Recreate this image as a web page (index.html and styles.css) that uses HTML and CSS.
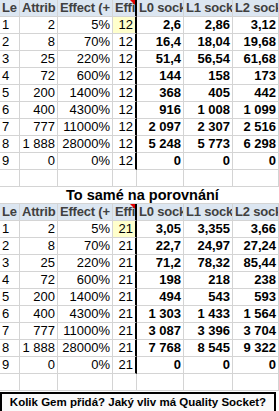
FILE: index.html
```html
<!DOCTYPE html>
<html>
<head>
<meta charset="utf-8">
<link rel="stylesheet" href="styles.css">
</head>
<body>
<div class="sheet">
  <div class="row hdr">
    <div class="c">Le</div><div class="c">Attrib</div><div class="c">Effect (+</div><div class="c d tri">Effi</div><div class="c">L0 sock</div><div class="c">L1 sock</div><div class="c">L2 sock</div>
  </div>
  <div class="row"><div class="c">1</div><div class="c n">2</div><div class="c n">5%</div><div class="c n d yel">12</div><div class="c n b">2,6</div><div class="c n b">2,86</div><div class="c n b">3,12</div></div>
  <div class="row"><div class="c">2</div><div class="c n">8</div><div class="c n">70%</div><div class="c n d">12</div><div class="c n b">16,4</div><div class="c n b">18,04</div><div class="c n b">19,68</div></div>
  <div class="row"><div class="c">3</div><div class="c n">25</div><div class="c n">220%</div><div class="c n d">12</div><div class="c n b">51,4</div><div class="c n b">56,54</div><div class="c n b">61,68</div></div>
  <div class="row"><div class="c">4</div><div class="c n">72</div><div class="c n">600%</div><div class="c n d">12</div><div class="c n b">144</div><div class="c n b">158</div><div class="c n b">173</div></div>
  <div class="row"><div class="c">5</div><div class="c n">200</div><div class="c n">1400%</div><div class="c n d">12</div><div class="c n b">368</div><div class="c n b">405</div><div class="c n b">442</div></div>
  <div class="row"><div class="c">6</div><div class="c n">400</div><div class="c n">4300%</div><div class="c n d">12</div><div class="c n b">916</div><div class="c n b">1 008</div><div class="c n b">1 099</div></div>
  <div class="row"><div class="c">7</div><div class="c n">777</div><div class="c n">11000%</div><div class="c n d">12</div><div class="c n b">2 097</div><div class="c n b">2 307</div><div class="c n b">2 516</div></div>
  <div class="row"><div class="c">8</div><div class="c n">1 888</div><div class="c n">28000%</div><div class="c n d">12</div><div class="c n b">5 248</div><div class="c n b">5 773</div><div class="c n b">6 298</div></div>
  <div class="row"><div class="c">9</div><div class="c n">0</div><div class="c n">0%</div><div class="c n d">12</div><div class="c n b">0</div><div class="c n b">0</div><div class="c n b">0</div></div>
  <div class="row"><div class="c"></div><div class="c"></div><div class="c"></div><div class="c"></div><div class="c"></div><div class="c"></div><div class="c"></div></div>
  <div class="row title"><div class="c span">To samé na porovnání</div></div>
  <div class="row hdr">
    <div class="c">Le</div><div class="c">Attrib</div><div class="c">Effect (+</div><div class="c d tri">Effi</div><div class="c">L0 sock</div><div class="c">L1 sock</div><div class="c">L2 sock</div>
  </div>
  <div class="row"><div class="c">1</div><div class="c n">2</div><div class="c n">5%</div><div class="c n d yel">21</div><div class="c n b">3,05</div><div class="c n b">3,355</div><div class="c n b">3,66</div></div>
  <div class="row"><div class="c">2</div><div class="c n">8</div><div class="c n">70%</div><div class="c n d">21</div><div class="c n b">22,7</div><div class="c n b">24,97</div><div class="c n b">27,24</div></div>
  <div class="row"><div class="c">3</div><div class="c n">25</div><div class="c n">220%</div><div class="c n d">21</div><div class="c n b">71,2</div><div class="c n b">78,32</div><div class="c n b">85,44</div></div>
  <div class="row"><div class="c">4</div><div class="c n">72</div><div class="c n">600%</div><div class="c n d">21</div><div class="c n b">198</div><div class="c n b">218</div><div class="c n b">238</div></div>
  <div class="row"><div class="c">5</div><div class="c n">200</div><div class="c n">1400%</div><div class="c n d">21</div><div class="c n b">494</div><div class="c n b">543</div><div class="c n b">593</div></div>
  <div class="row"><div class="c">6</div><div class="c n">400</div><div class="c n">4300%</div><div class="c n d">21</div><div class="c n b">1 303</div><div class="c n b">1 433</div><div class="c n b">1 564</div></div>
  <div class="row"><div class="c">7</div><div class="c n">777</div><div class="c n">11000%</div><div class="c n d">21</div><div class="c n b">3 087</div><div class="c n b">3 396</div><div class="c n b">3 704</div></div>
  <div class="row"><div class="c">8</div><div class="c n">1 888</div><div class="c n">28000%</div><div class="c n d">21</div><div class="c n b">7 768</div><div class="c n b">8 545</div><div class="c n b">9 322</div></div>
  <div class="row"><div class="c">9</div><div class="c n">0</div><div class="c n">0%</div><div class="c n d">21</div><div class="c n b">0</div><div class="c n b">0</div><div class="c n b">0</div></div>
  <div class="row"><div class="c"></div><div class="c"></div><div class="c"></div><div class="c"></div><div class="c"></div><div class="c"></div><div class="c"></div></div>
  <div class="bar">Kolik Gem přidá? Jaký vliv má Quality Socket?</div>
</div>
</body>
</html>
```
FILE: styles.css
```css
html, body {
  margin: 0;
  padding: 0;
  background: #fff;
  overflow: hidden;
}
.sheet {
  width: 279px;
  font-family: "Liberation Sans", Arial, sans-serif;
  font-size: 13px;
  color: #000;
}
.row {
  display: grid;
  grid-template-columns: 20px 38px 55px 24px 47px 49px 46px;
  height: 17px;
}
.c {
  box-sizing: border-box;
  border-right: 1px solid #d4d4d4;
  border-bottom: 1px solid #d4d4d4;
  overflow: hidden;
  white-space: nowrap;
  padding: 0 2px;
  line-height: 16px;
  position: relative;
}
.n { text-align: right; }
.b { font-weight: bold; }
.d { border-right: 2px solid #000; }
.yel { background: #ffffcc; }
.hdr .c {
  background: #dce6f1;
  font-weight: bold;
  color: #404040;
  padding: 0 0 0 2px;
  letter-spacing: -0.2px;
}
.tri::after {
  content: "";
  position: absolute;
  top: 0;
  right: 0;
  width: 0;
  height: 0;
  border-top: 5px solid #e00000;
  border-left: 5px solid transparent;
}
.title { grid-template-columns: 279px; }
.title .span {
  border-right: none;
  text-align: center;
  font-weight: bold;
  font-size: 14.5px;
  padding-left: 8px;
}
.bar {
  box-sizing: border-box;
  width: 276px;
  height: 21px;
  margin-top: 1px;
  border: 2px solid #000;
  border-bottom: none;
  font-weight: bold;
  font-size: 11.5px;
  line-height: 17px;
  text-align: center;
  background: #fafafa;
}
```
